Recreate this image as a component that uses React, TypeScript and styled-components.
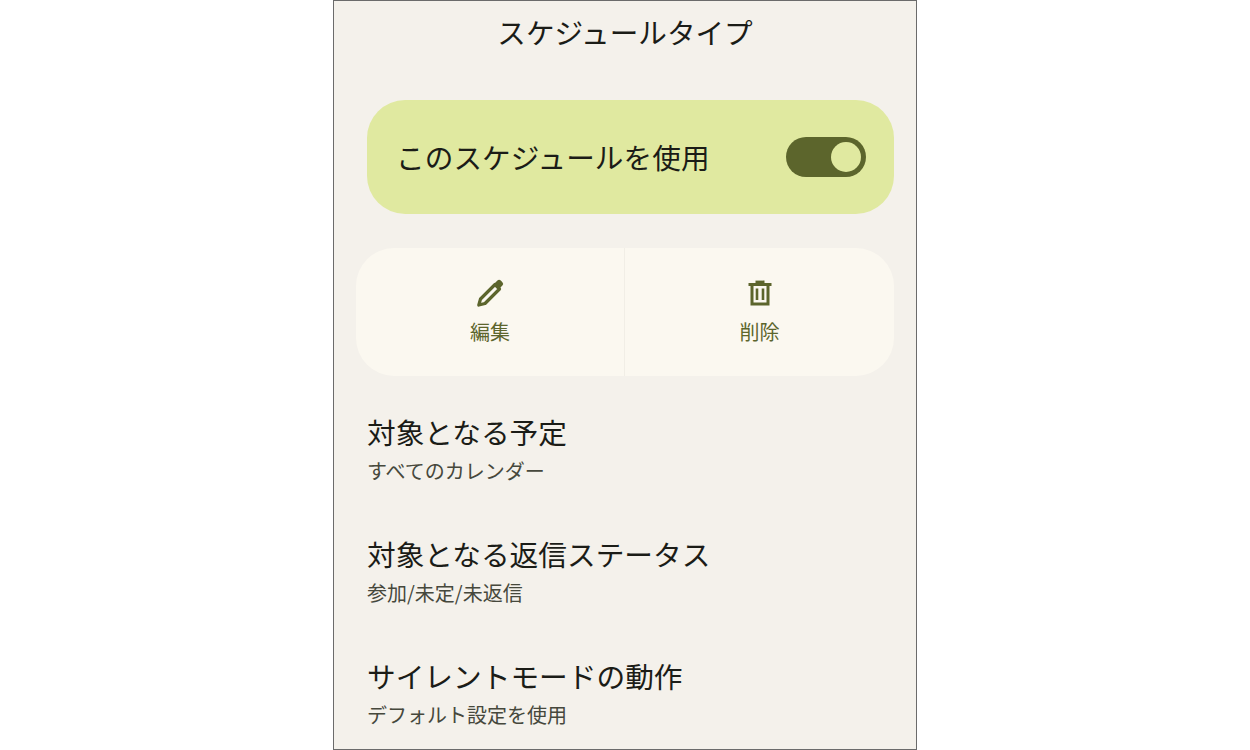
import React from "react";
import styled, { createGlobalStyle } from "styled-components";

const Global = createGlobalStyle`
  html, body { margin: 0; padding: 0; background: #ffffff; }
  body { font-family: "Noto Sans CJK JP", "Noto Sans", sans-serif; }
`;

const Frame = styled.main`
  box-sizing: border-box;
  width: 584px;
  height: 750px;
  margin: 0 auto;
  border: 1px solid #6b6b6b;
  background: #f4f1eb;
  overflow: hidden;
  display: flex;
  flex-direction: column;
`;

const Title = styled.h1`
  margin: 11px 0 0;
  height: 40px;
  font-size: 28.6px;
  line-height: 40px;
  font-weight: 400;
  color: #1b1c17;
  text-align: center;
`;

const MainSwitchCard = styled.section`
  height: 114px;
  margin: 48px 22px 0 33px;
  padding: 0 28px 0 29px;
  border-radius: 38px;
  background: #e0e9a0;
  display: flex;
  align-items: center;
  justify-content: space-between;
`;

const SwitchLabel = styled.span`
  font-size: 28.6px;
  line-height: 40px;
  letter-spacing: 0.1px;
  color: #1b1c17;
`;

const Track = styled.div`
  box-sizing: border-box;
  width: 80px;
  height: 40px;
  padding: 5px;
  border-radius: 20px;
  background: #5c652c;
  display: flex;
  justify-content: flex-end;
  align-items: center;
`;

const Thumb = styled.div`
  width: 30px;
  height: 30px;
  border-radius: 50%;
  background: #e0e9a0;
`;

const ActionCard = styled.section`
  height: 128px;
  margin: 34px 22px 0 22px;
  border-radius: 38px;
  background: #fbf8f0;
  display: grid;
  grid-template-columns: 269px 1fr;
  overflow: hidden;
`;

const ActionButton = styled.button<{ $divider?: boolean }>`
  padding: 30px 0 0;
  border: 0;
  border-right: ${(p) => (p.$divider ? "1px solid #f1eee6" : "0")};
  background: transparent;
  display: flex;
  flex-direction: column;
  align-items: center;
  font-family: inherit;
  color: #5c652c;
`;

const ActionIcon = styled.svg`
  width: 32px;
  height: 32px;
  display: block;
`;

const ActionLabel = styled.span`
  margin-top: 8px;
  font-size: 20px;
  line-height: 28px;
`;

const SettingList = styled.div`
  margin: 35px 0 0 33px;
  display: flex;
  flex-direction: column;
  gap: 47px;
`;

const SettingRow = styled.div`
  display: flex;
  flex-direction: column;
`;

const SettingTitle = styled.div`
  font-size: 28.7px;
  line-height: 42px;
  color: #1b1c17;
`;

const SettingValue = styled.div`
  margin-top: 2px;
  margin-bottom: -1px;
  font-size: 20px;
  line-height: 32px;
  color: #46483c;
`;

const settings = [
  ["対象となる予定", "すべてのカレンダー"],
  ["対象となる返信ステータス", "参加/未定/未返信"],
  ["サイレントモードの動作", "デフォルト設定を使用"],
];

export default function App() {
  return (
    <Frame>
      <Global />
      <Title>スケジュールタイプ</Title>
      <MainSwitchCard>
        <SwitchLabel>このスケジュールを使用</SwitchLabel>
        <Track>
          <Thumb />
        </Track>
      </MainSwitchCard>
      <ActionCard>
        <ActionButton $divider>
          <ActionIcon viewBox="0 0 32 32" fill="none">
            <path
              d="M4.8 27 L6.5 21 L21 6.5 L25.5 11 L11 25.5 Z"
              stroke="currentColor"
              strokeWidth="3.2"
              strokeLinejoin="round"
            />
            <path
              d="M20 6 L23.4 2.6 a2.4 2.4 0 0 1 3.4 0 L28.4 4.2 a2.4 2.4 0 0 1 0 3.4 L25 11 Z"
              fill="currentColor"
            />
          </ActionIcon>
          <ActionLabel>編集</ActionLabel>
        </ActionButton>
        <ActionButton>
          <ActionIcon viewBox="0 0 32 32" fill="none">
            <path d="M4.5 6.5 H27.5" stroke="currentColor" strokeWidth="3" />
            <path d="M11.5 3.8 H20.5" stroke="currentColor" strokeWidth="2.4" />
            <path d="M8 6.5 V26 H24 V6.5" stroke="currentColor" strokeWidth="3" />
            <path d="M13 10.5 V22 M19 10.5 V22" stroke="currentColor" strokeWidth="2.6" />
          </ActionIcon>
          <ActionLabel>削除</ActionLabel>
        </ActionButton>
      </ActionCard>
      <SettingList>
        {settings.map(([title, value]) => (
          <SettingRow key={title}>
            <SettingTitle>{title}</SettingTitle>
            <SettingValue>{value}</SettingValue>
          </SettingRow>
        ))}
      </SettingList>
    </Frame>
  );
}
